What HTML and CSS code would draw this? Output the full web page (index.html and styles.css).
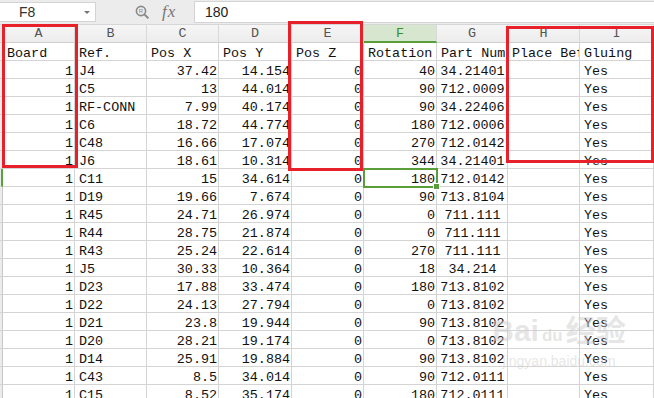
FILE: index.html
```html
<!DOCTYPE html>
<html lang="en">
<head>
  <meta charset="UTF-8" />
  <title>Sheet</title>
  <link rel="stylesheet" href="styles.css">
</head>
<body>
  <div class="app">
    <div class="formula-bar">
      <div class="name-box">
        <span>F8</span>
        <span class="caret"></span>
      </div>
      <div class="fx-tools">
        <svg class="zoom-icon" width="14" height="14" viewBox="0 0 14 14">
          <circle cx="6" cy="6" r="4.6" fill="none" stroke="#8a8a8a" stroke-width="1.6"/>
          <path d="M9.4 9.4 L12.8 12.8" stroke="#8a8a8a" stroke-width="2" stroke-linecap="round"/>
          <text x="6" y="8.2" font-size="6" text-anchor="middle" fill="#8a8a8a" font-family="Liberation Sans">R</text>
        </svg>
        <span class="fx">fx</span>
      </div>
      <div class="formula-input">180</div>
    </div>

    <div class="sheet" id="sheet">
      <div class="corner"></div>
      <div class="col-head">A</div>
      <div class="col-head">B</div>
      <div class="col-head">C</div>
      <div class="col-head">D</div>
      <div class="col-head">E</div>
      <div class="col-head active">F</div>
      <div class="col-head">G</div>
      <div class="col-head">H</div>
      <div class="col-head">I</div>
    </div>

    <div class="mark mark-a"></div>
    <div class="mark mark-e"></div>
    <div class="mark mark-hi"></div>

    <div class="watermark">
      <div class="wm-logo">Bai<span class="paw">du</span>经验</div>
      <div class="wm-url">jingyan.baidu.com</div>
    </div>
  </div>

  <script src="sheet.js"></script>
</body>
</html>
```

FILE: sheet.js
```js
var rows = [
  ['Board', 'Ref.', 'Pos X', 'Pos Y', 'Pos Z', 'Rotation', 'Part Number', 'Place Before', 'Gluing'],
  ['1', 'J4', '37.42', '14.154', '0', '40', '34.21401', '', 'Yes'],
  ['1', 'C5', '13', '44.014', '0', '90', '712.0009', '', 'Yes'],
  ['1', 'RF-CONN', '7.99', '40.174', '0', '90', '34.22406', '', 'Yes'],
  ['1', 'C6', '18.72', '44.774', '0', '180', '712.0006', '', 'Yes'],
  ['1', 'C48', '16.66', '17.074', '0', '270', '712.0142', '', 'Yes'],
  ['1', 'J6', '18.61', '10.314', '0', '344', '34.21401', '', 'Yes'],
  ['1', 'C11', '15', '34.614', '0', '180', '712.0142', '', 'Yes'],
  ['1', 'D19', '19.66', '7.674', '0', '90', '713.8104', '', 'Yes'],
  ['1', 'R45', '24.71', '26.974', '0', '0', '711.111', '', 'Yes'],
  ['1', 'R44', '28.75', '21.874', '0', '0', '711.111', '', 'Yes'],
  ['1', 'R43', '25.24', '22.614', '0', '270', '711.111', '', 'Yes'],
  ['1', 'J5', '30.33', '10.364', '0', '18', '34.214', '', 'Yes'],
  ['1', 'D23', '17.88', '33.474', '0', '180', '713.8102', '', 'Yes'],
  ['1', 'D22', '24.13', '27.794', '0', '0', '713.8102', '', 'Yes'],
  ['1', 'D21', '23.8', '19.944', '0', '90', '713.8102', '', 'Yes'],
  ['1', 'D20', '28.21', '19.174', '0', '0', '713.8102', '', 'Yes'],
  ['1', 'D14', '25.91', '19.884', '0', '90', '713.8102', '', 'Yes'],
  ['1', 'C43', '8.5', '34.014', '0', '90', '712.0111', '', 'Yes'],
  ['1', 'C15', '8.52', '35.174', '0', '180', '712.0111', '', 'Yes']
];

var numCols = [0, 2, 3, 4, 5];
var sheet = document.getElementById('sheet');

rows.forEach(function (row, r) {
  var head = document.createElement('div');
  head.className = 'row-head' + (r === 7 ? ' active' : '');
  sheet.appendChild(head);

  row.forEach(function (val, c) {
    var cell = document.createElement('div');
    cell.className = 'cell';
    if (r > 0 && numCols.indexOf(c) !== -1) cell.className += ' num';
    if (r > 0 && c === 6) cell.className += ' mid';
    if (r === 7 && c === 5) cell.className += ' selected';
    cell.textContent = val;
    sheet.appendChild(cell);
  });
});
```

FILE: styles.css
```css
body {
  margin: 0;
  background: #fff;
  overflow: hidden;
}

.app {
  position: relative;
  width: 654px;
  height: 398px;
  overflow: hidden;
  font-family: 'Liberation Mono', 'DejaVu Sans Mono', monospace;
}

/* Formula bar */
.formula-bar {
  height: 24px;
  display: flex;
  align-items: center;
  background: #ececec;
  border-bottom: 1px solid #d6d6d6;
}

.name-box {
  width: 96px;
  height: 20px;
  background: #fff;
  border: 1px solid #d4d4d4;
  border-left: none;
  display: flex;
  align-items: center;
  justify-content: space-between;
  padding-left: 19px;
  padding-right: 6px;
  box-sizing: border-box;
  font-family: 'Liberation Sans', Arial, sans-serif;
  font-size: 14px;
  color: #333;
}

.caret {
  width: 0;
  height: 0;
  border-left: 3px solid transparent;
  border-right: 3px solid transparent;
  border-top: 3px solid #777;
  margin-right: -1px;
}

.fx-tools {
  width: 98px;
  display: flex;
  align-items: center;
  gap: 13px;
  padding-left: 39px;
  box-sizing: border-box;
}

.fx {
  font-family: 'Liberation Serif', 'Times New Roman', serif;
  font-style: italic;
  font-size: 17px;
  color: #777;
  letter-spacing: 1px;
}

.formula-input {
  flex: 1;
  height: 20px;
  background: #fff;
  border: 1px solid #d4d4d4;
  border-right: none;
  padding-left: 10px;
  font-family: 'Liberation Sans', Arial, sans-serif;
  font-size: 14px;
  line-height: 20px;
  color: #222;
}

/* Grid */
.sheet {
  display: grid;
  grid-template-columns: 3px 72px 72px 72px 73px 72px 73px 71px 72px 74px;
  grid-template-rows: 18px;
  grid-auto-rows: 18px;
  font-size: 13.4px;
  color: #111;
}

.corner {
  background: #e6e6e6;
  border-bottom: 1px solid #cfcfcf;
}

.col-head {
  background: linear-gradient(#f6f6f6, #ececec);
  border-right: 1px solid #d9d9d9;
  border-bottom: 1px solid #cfcfcf;
  text-align: center;
  padding-top: 1px;
  line-height: 16px;
  color: #555;
  box-sizing: border-box;
}

.col-head.active {
  background: #d6e6cf;
  color: #3d8f1c;
  border-bottom: 2px solid #5a9e3b;
}

.row-head {
  background: #ececec;
  border-bottom: 1px solid #d4d4d4;
  border-right: 1px solid #c9c9c9;
  box-sizing: border-box;
}

.row-head.active {
  border-right: 2px solid #5aa23a;
}

.cell {
  border-right: 1px solid #d4d4d4;
  border-bottom: 1px solid #d4d4d4;
  box-sizing: border-box;
  padding: 3px 1px 0 4px;
  line-height: 15px;
  white-space: nowrap;
  overflow: hidden;
}

.cell.num {
  text-align: right;
}

.cell.mid {
  text-align: center;
  padding-left: 2px;
}

.cell.selected {
  position: relative;
  overflow: visible;
  outline: 2px solid #5a9e3b;
  outline-offset: -1px;
}

.cell.selected::after {
  content: '';
  position: absolute;
  right: -4px;
  bottom: -4px;
  width: 5px;
  height: 5px;
  background: #5a9e3b;
  border: 1px solid #fff;
}

/* Hand-drawn red highlight boxes */
.mark {
  position: absolute;
  border: 3px solid #e8202a;
  box-sizing: border-box;
}

.mark-a {
  left: 2px;
  top: 24px;
  width: 76px;
  height: 144px;
}

.mark-e {
  left: 288px;
  top: 21px;
  width: 75px;
  height: 150px;
}

.mark-hi {
  left: 506px;
  top: 26px;
  width: 148px;
  height: 137px;
}

/* Watermark */
.watermark {
  position: absolute;
  left: 484px;
  top: 314px;
  width: 150px;
  color: rgba(205, 205, 205, 0.5);
  font-family: 'Liberation Sans', 'Noto Sans CJK SC', sans-serif;
  text-align: center;
  pointer-events: none;
}

.wm-logo {
  font-size: 30px;
  font-weight: bold;
  line-height: 34px;
  white-space: nowrap;
}

.paw {
  font-size: 17px;
  margin: 0 3px;
}

.wm-url {
  font-size: 14px;
  line-height: 16px;
}
```
